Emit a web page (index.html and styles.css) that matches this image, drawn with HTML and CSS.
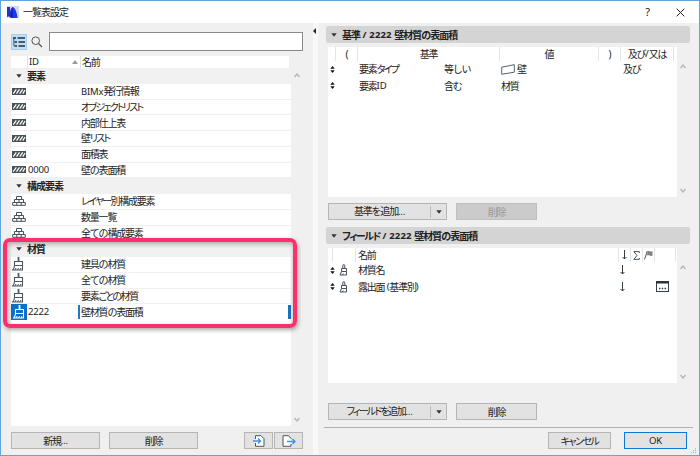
FILE: index.html
```
<!DOCTYPE html>
<html lang="ja">
<head>
    <meta charset="UTF-8">
    <title>一覧表設定</title>
    <link rel="stylesheet" href="styles.css">
</head>
<body>
    <!-- shared icons -->
    <svg class="defs">
        <symbol id="wall" viewBox="0 0 14 7">
            <rect width="14" height="7" fill="#465158"/>
            <path d="M1.300 5.700l3-4.400M4.500 5.700l3-4.400M7.700 5.700l3-4.400M10.700 5.700l2.300-3.500" stroke="#fff" stroke-width="1.200"/>
        </symbol>
        <symbol id="bricks" viewBox="0 0 14 10">
            <path d="M4.500 3.500v-3h5v3M2.500 6.500v-3h9v3M7 3.500v3M.7 9.300V6.500h12.600v2.800zM4.800 6.500v3M9.200 6.500v3" fill="#fff" stroke="#465158"/>
        </symbol>
        <symbol id="brush" viewBox="0 0 13 14">
            <path d="M2.500 8.500v-4h8v4zM2.500 8.500c0 2-.5 3-2 4.500h10V8.500" fill="none" stroke="currentColor" stroke-width="1.100"/>
            <path d="M6.500 0v4.500" stroke="currentColor" stroke-width="1.800"/>
            <path d="M3 13l1-2M5.500 13l1-2M8 13l1-2" stroke="currentColor"/>
        </symbol>
        <symbol id="brush-small" viewBox="0 0 9 12">
            <path d="M3.800 4.500V1.200L5 .5l.8.7v3.300M2.500 7.500v-3H7.500v3zM2.500 7.500L1 11h6.500V7.500M3.500 11l.7-1.500" fill="none" stroke="#465158"/>
        </symbol>
        <symbol id="sort" viewBox="0 0 5 7">
            <path d="M.3 2.700L2.500 0l2.200 2.700zM.3 4.200h4.400L2.500 7z" fill="#111"/>
        </symbol>
        <symbol id="down" viewBox="0 0 5 10">
            <path d="M2.500 0v9M.6 7l1.900 2L4.400 7" fill="none" stroke="#333d45"/>
        </symbol>
        <symbol id="tri" viewBox="0 0 6 4">
            <path d="M.3.3h5.400L3 3.700z" fill="#333"/>
        </symbol>
        <symbol id="chev" viewBox="0 0 6 5">
            <path d="M.5 4L3 1l2.500 3" fill="none" stroke="#b4b4b4" stroke-width="1.300"/>
        </symbol>
    </svg>

    <div class="window">
        <header class="titlebar">
            <svg width="12" height="12" viewBox="0 0 12 12">
                <rect width="12" height="12" fill="#d5d9ef"/>
                <path d="M0 1h3v9l-3 1z" fill="#2536b4"/>
                <path d="M2.500 11C3 6 3 2 6 1c3 2 4 6 4.500 11H5z" fill="#2034ff"/>
                <path d="M2.500 11C3.500 8 4 4 6 1L5.500 12z" fill="#1522a8"/>
            </svg>
            <span class="title">一覧表設定</span>
            <span class="help">?</span>
            <svg width="9" height="9" viewBox="0 0 9 9"><path d="M.7.7l7.600 7.600M8.300.7L.7 8.300" stroke="#222"/></svg>
        </header>

        <div class="content">
            <section class="left">
                <div class="search">
                    <span class="view">
                        <svg width="12" height="10" viewBox="0 0 12 10"><path d="M0 1h3M4.500 1H12M2 5h2M5.500 5H12M2 9h2M5.500 9H12" stroke="#26323c" stroke-width="1.700"/><path d="M.9 1v8M1 5h1M1 9h1" stroke="#26323c" stroke-width=".8"/></svg>
                    </span>
                    <svg width="12" height="12" viewBox="0 0 12 12"><circle cx="4.700" cy="4.700" r="3.800" fill="none" stroke="#555"/><path d="M7.500 7.500L11 11" stroke="#555" stroke-width="1.200"/></svg>
                    <input type="text">
                </div>
                <div class="list-wrap">
                    <div class="list">
                        <div class="list-head">
                            <span></span><span><i class="en">ID</i><svg width="6" height="4" viewBox="0 0 6 4"><path d="M0 4l3-4 3 4z" fill="#999"/></svg></span><span>名前</span>
                        </div>
                        <div class="group"><svg width="6" height="4"><use href="#tri"/></svg>要素</div>
                        <div class="row"><svg width="14" height="7"><use href="#wall"/></svg><span></span><span><i class="en">BIMx</i>発行情報</span></div>
                        <div class="row"><svg width="14" height="7"><use href="#wall"/></svg><span></span><span class="kana">オブジェクトリスト</span></div>
                        <div class="row"><svg width="14" height="7"><use href="#wall"/></svg><span></span><span>内部仕上表</span></div>
                        <div class="row"><svg width="14" height="7"><use href="#wall"/></svg><span></span><span>壁<i class="kana">リスト</i></span></div>
                        <div class="row"><svg width="14" height="7"><use href="#wall"/></svg><span></span><span>面積表</span></div>
                        <div class="row"><svg width="14" height="7"><use href="#wall"/></svg><span class="en">0000</span><span>壁の表面積</span></div>
                        <div class="group"><svg width="6" height="4"><use href="#tri"/></svg>構成要素</div>
                        <div class="row"><svg width="14" height="10"><use href="#bricks"/></svg><span></span><span><i class="kana">レイヤー</i>別構成要素</span></div>
                        <div class="row"><svg width="14" height="10"><use href="#bricks"/></svg><span></span><span>数量一覧</span></div>
                        <div class="row"><svg width="14" height="10"><use href="#bricks"/></svg><span></span><span>全ての構成要素</span></div>
                        <div class="group"><svg width="6" height="4"><use href="#tri"/></svg>材質</div>
                        <div class="row"><svg width="13" height="14"><use href="#brush"/></svg><span></span><span>建具の材質</span></div>
                        <div class="row"><svg width="13" height="14"><use href="#brush"/></svg><span></span><span>全ての材質</span></div>
                        <div class="row"><svg width="13" height="14"><use href="#brush"/></svg><span></span><span>要素<i class="kana">ごとの</i>材質</span></div>
                        <div class="row selected"><b><svg width="13" height="14"><use href="#brush"/></svg></b><span class="en">2222</span><span>壁材質の表面積</span></div>
                        <div class="highlight"></div>
                    </div>
                    <div class="scroll"><svg width="6" height="5"><use href="#chev"/></svg><svg class="flip" width="6" height="5"><use href="#chev"/></svg></div>
                </div>
                <div class="buttons">
                    <button class="w89">新規<i class="en">...</i></button>
                    <button class="w89">削除</button>
                    <button class="io first"><svg width="12" height="12" viewBox="0 0 12 12"><path d="M2.500 4V.7H8l3 3v7.600H2.500V8" fill="#fff" stroke="#4a555c"/><path d="M0 6h7M5 3.500L7.500 6 5 8.500" fill="none" stroke="#3d8ef5" stroke-width="1.300"/></svg></button>
                    <button class="io"><svg width="14" height="12" viewBox="0 0 14 12"><path d="M9 4V3.500L6.500.7H1v10.600h8V9" fill="#fff" stroke="#4a555c"/><path d="M5 6.500h8M10.500 4L13 6.500 10.500 9" fill="none" stroke="#3d8ef5" stroke-width="1.300"/></svg></button>
                </div>
            </section>

            <div class="splitter"><svg width="3" height="6" viewBox="0 0 3 6"><path d="M3 0v6L0 3z" fill="#222"/></svg></div>

            <section class="right">
                <h2><svg width="6" height="4"><use href="#tri"/></svg>基準<i class="en">&nbsp;/ 2222&nbsp;</i>壁材質の表面積</h2>
                <div class="table-wrap criteria">
                    <div class="table">
                        <div class="cells head">
                            <span></span><span>(</span><span class="span2">基準</span><span>値</span><span>)</span><span>及び<i class="en">/</i>又は</span>
                        </div>
                        <div class="cells">
                            <svg width="5" height="7"><use href="#sort"/></svg><span></span><span>要素<i class="kana">タイプ</i></span><span>等しい</span>
                            <span><svg class="slab" width="14" height="11" viewBox="0 0 14 11"><path d="M.7 3.200L13.300.7v7.500L.7 10.300z" fill="#fff" stroke="#56646c"/></svg>壁</span><span></span><span>及び</span>
                        </div>
                        <div class="cells">
                            <svg width="5" height="7"><use href="#sort"/></svg><span></span><span>要素<i class="en">ID</i></span><span>含む</span><span>材質</span><span></span><span></span>
                        </div>
                    </div>
                    <div class="scroll"><svg width="6" height="5"><use href="#chev"/></svg><svg class="flip" width="6" height="5"><use href="#chev"/></svg></div>
                </div>
                <div class="buttons">
                    <button class="drop"><span>基準を追加<i class="en">...</i></span><em><svg width="6" height="4"><use href="#tri"/></svg></em></button>
                    <button class="w81" disabled>削除</button>
                </div>

                <h2 class="second"><svg width="6" height="4"><use href="#tri"/></svg><i class="kana">フィールド</i><i class="en">&nbsp;/ 2222&nbsp;</i>壁材質の表面積</h2>
                <div class="table-wrap fields">
                    <div class="table">
                        <div class="cells head">
                            <span></span><span></span><span class="name">名前</span><span><svg width="5" height="10"><use href="#down"/></svg></span><span><svg width="7" height="9" viewBox="0 0 7 9"><path d="M6.300 2V.6H.8L4 4.500.8 8.400h5.500V7" fill="none" stroke="#465158"/></svg></span><span><svg width="9" height="10" viewBox="0 0 9 10"><path d="M.5 9.500L3.300 1" stroke="#555"/><path d="M3.500 1.500c2-1.500 3 1 5-.5v4.500c-2 1.500-3-1-5.500 0z" fill="#7d8388"/></svg></span><span></span>
                        </div>
                        <div class="cells">
                            <svg width="5" height="7"><use href="#sort"/></svg><svg width="9" height="12"><use href="#brush-small"/></svg><span>材質名</span><svg width="5" height="10"><use href="#down"/></svg>
                        </div>
                        <div class="cells">
                            <svg width="5" height="7"><use href="#sort"/></svg><svg width="9" height="12"><use href="#brush-small"/></svg><span>露出面<i class="en">&nbsp;(</i>基準別<i class="en">)</i></span><svg width="5" height="10"><use href="#down"/></svg><span></span><span></span>
                            <svg width="13" height="11" viewBox="0 0 13 11"><rect x=".5" y=".5" width="12" height="10" fill="#fff" stroke="#333d45"/><path d="M0 1.500h13" stroke="#26323c" stroke-width="2"/><path d="M3 7.500h1.400M5.800 7.500h1.400M8.600 7.500H10" stroke="#26323c" stroke-width="1.400"/></svg>
                        </div>
                    </div>
                    <div class="scroll"><svg width="6" height="5"><use href="#chev"/></svg><svg class="flip" width="6" height="5"><use href="#chev"/></svg></div>
                </div>
                <div class="buttons field-buttons">
                    <button class="drop"><span><i class="kana">フィールドを</i>追加<i class="en">...</i></span><em><svg width="6" height="4"><use href="#tri"/></svg></em></button>
                    <button class="w81">削除</button>
                </div>
                <footer>
                    <button><i class="kana">キャンセル</i></button>
                    <button class="ok"><i class="en">OK</i></button>
                    <svg class="grip" width="6" height="6" viewBox="0 0 6 6"><path d="M4.500 0v6M2.500 2v4M.5 4v2" stroke="#bbb" stroke-dasharray="1.300 .7"/></svg>
                </footer>
            </section>
        </div>
    </div>
</body>
</html>
```

FILE: styles.css
```
* {
    box-sizing: border-box;
}

body {
    margin: 0;
    font-family: "Noto Sans", "Noto Sans CJK JP", sans-serif;
    font-size: 10px;
    line-height: 14px;
    letter-spacing: -1.2px;
    color: #222;
    white-space: nowrap;
}

svg {
    display: block;
    flex: none;
}

.defs {
    display: none;
}

i {
    font-style: normal;
}

.kana {
    font-feature-settings: "palt";
    letter-spacing: -1.8px;
}

.en {
    font-size: 9.5px;
    letter-spacing: -.2px;
}

.window {
    width: 700px;
    height: 456px;
    border: 1px solid #62a5de;
    background: #f0f0f0;
    display: flex;
    flex-direction: column;
    overflow: hidden;
}

.titlebar {
    height: 22px;
    background: #fff;
    display: flex;
    align-items: center;
    padding: 0 14px 0 6px;
}

.title {
    margin-left: 4px;
    flex: 1;
    letter-spacing: -1px;
}

.help {
    margin-right: 26px;
    font-size: 11px;
    letter-spacing: 0;
}

.content {
    flex: 1;
    display: flex;
}

/* left side */
.left {
    width: 312px;
    padding: 9px 10px 0 10px;
}

.search {
    display: flex;
    align-items: center;
    height: 19px;
}

.view {
    width: 16px;
    height: 16px;
    margin-right: 4px;
    background: #bfdff6;
    border: 1px solid #a5cfee;
    display: flex;
    align-items: center;
    justify-content: center;
}

.search input {
    width: 255px;
    height: 19px;
    margin-left: 6px;
    border: 1px solid #8a8a8a;
    background: #fff;
}

.list-wrap {
    display: flex;
    margin-top: 5px;
    height: 370px;
}

.list {
    position: relative;
    width: 280px;
    background: #fff;
}

.list-head {
    height: 12px;
    line-height: 12px;
    display: grid;
    grid-template-columns: 16px 53px 1fr;
    border-right: 2px solid #f0f0f0;
}

.list-head span {
    display: flex;
    align-items: center;
    justify-content: space-between;
    padding: 0 2px 0 1px;
    border-left: 1px solid #e2e2e2;
}

.list-head span:first-child {
    border: 0;
}

.group {
    height: 15.75px;
    background: #f1f1f1;
    display: flex;
    align-items: center;
    padding-left: 5px;
    font-weight: bold;
    letter-spacing: -1px;
}

.group svg {
    margin-right: 5px;
}

.row {
    height: 15.75px;
    display: grid;
    grid-template-columns: 17px 53px 1fr;
    align-items: center;
    border-bottom: 1px solid #f0f0f0;
}

.row svg {
    margin-left: 1px;
    color: #4a555c;
}

.row.selected {
    border: 0;
}

.selected b {
    width: 16px;
    height: 16px;
    background: #0c6fc5;
    display: flex;
    align-items: center;
}

.selected svg {
    margin-left: 2px;
    color: #fff;
}

.selected span:last-child {
    margin-left: -3px;
    padding-left: 1px;
    border-left: 2px solid #1d78c8;
    border-right: 3px solid #1d6fc0;
}

.highlight {
    position: absolute;
    left: -8px;
    top: 182px;
    width: 294px;
    height: 90px;
    border: 4px solid #fc316b;
    border-radius: 7px;
    box-shadow: 1px 2px 4px rgba(0, 0, 0, .35), inset 1px 2px 5px rgba(0, 0, 0, .3);
}

.scroll {
    width: 12px;
    display: flex;
    flex-direction: column;
    justify-content: space-between;
    align-items: center;
    padding: 17px 0 4px;
}

.flip {
    transform: rotate(180deg);
}

.buttons {
    display: flex;
    margin-top: 6px;
}

button {
    height: 17px;
    padding: 0;
    border: 1px solid #b5b5b5;
    background: #e2e2e2;
    color: #222;
    font: inherit;
    letter-spacing: inherit;
    line-height: 14px;
    display: flex;
    align-items: center;
    justify-content: center;
}

.w89 {
    width: 89px;
    margin-right: 9px;
}

.io {
    width: 29px;
}

.first {
    margin-left: 37px;
    margin-right: 1px;
}

.splitter {
    width: 5px;
    background: #f8f8f8;
    padding-top: 5px;
}

/* right side */
.right {
    width: 380px;
    padding: 3px 5px 0 8px;
}

h2 {
    width: 364px;
    height: 17px;
    margin: 0;
    padding-left: 5px;
    border-radius: 2px;
    background: #d4d4d4;
    font-size: 10px;
    letter-spacing: -1px;
    display: flex;
    align-items: center;
}

h2 svg {
    margin-right: 5px;
}

h2 .en {
    letter-spacing: .15px;
}

h2 .kana {
    letter-spacing: -1.4px;
}

.second {
    margin-top: 7px;
}

.table-wrap {
    display: flex;
    margin: 4px 0 0 2px;
}

.table {
    width: 349px;
    background: #fff;
}

.criteria {
    height: 150px;
}

.fields {
    height: 135px;
}

.cells {
    display: grid;
    align-items: center;
    height: 16.5px;
    padding-left: 2px;
}

.criteria .cells {
    grid-template-columns: 9px 20px 85px 57px 100px 22px 54px;
}

.fields .cells {
    grid-template-columns: 9px 19px 262px 12px 12px 12px 16px;
}

.cells span {
    display: flex;
    align-items: center;
}

.slab {
    margin-right: 2px;
}

.cells.head {
    height: 14px;
    padding: 0;
}

.criteria .head {
    grid-template-columns: 8px 22px 142px 99px 22px 53px;
}

.fields .head {
    grid-template-columns: 5px 23px 263px 12px 12px 12px 21px;
}

.head span {
    height: 14px;
    justify-content: center;
    border-right: 1px solid #e4e4e4;
}

.head .name {
    justify-content: flex-start;
    padding-left: 2px;
}

.drop {
    width: 119px;
    margin-left: 2px;
    margin-right: 9px;
}

.drop span {
    flex: 1;
    text-align: center;
}

.drop em {
    width: 16px;
    height: 12px;
    border-left: 1px solid #bbb;
    display: flex;
    align-items: center;
    justify-content: center;
}

.w81 {
    width: 81px;
}

button:disabled {
    background: #cbcbcb;
    border-color: #c0c0c0;
    color: #999;
}

.field-buttons {
    margin-top: 20px;
}

footer {
    position: relative;
    display: flex;
    justify-content: flex-end;
    gap: 13px;
    margin: 7px 0 0 -2px;
    padding: 4px 6px 0 0;
    border-top: 1px solid #b0b0b0;
}

footer button {
    width: 63px;
}

footer .kana {
    letter-spacing: -1.5px;
}

.ok {
    border: 1.5px solid #0b78d6;
}

.grip {
    position: absolute;
    right: -4px;
    top: 20px;
}
```
